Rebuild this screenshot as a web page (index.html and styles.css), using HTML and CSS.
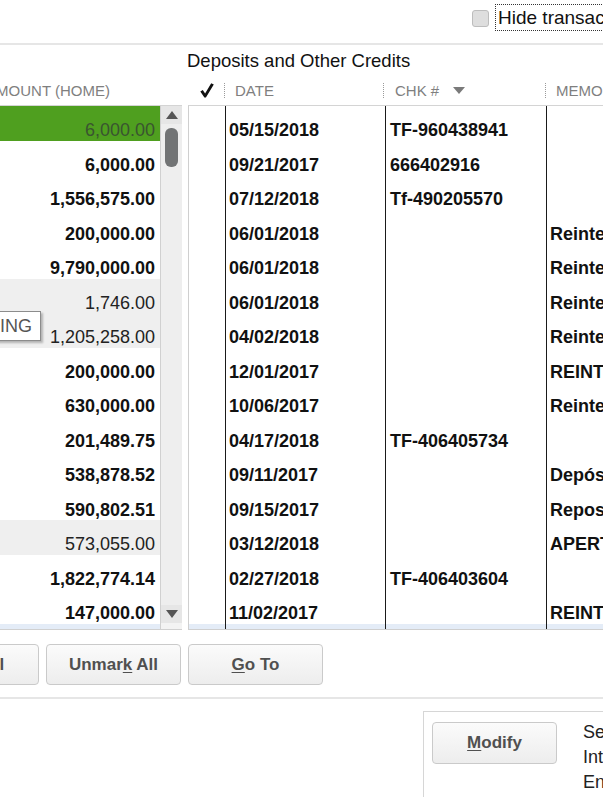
FILE: index.html
```html
<!DOCTYPE html>
<html>
<head>
<meta charset="utf-8">
<link rel="stylesheet" href="styles.css">
</head>
<body>
<div class="page">
  <div class="topbar">
    <span class="checkbox"></span>
    <span class="hide-label">Hide transactions after the statement's end date</span>
  </div>
  <div class="title">Deposits and Other Credits</div>
  <div class="headers">
    <div class="h-left"><span class="h-amount">AMOUNT (HOME)</span></div>
    <div class="h-right">
      <div class="hc hc-check"><svg class="check" width="14" height="15" viewBox="0 0 14 15"><polygon points="0.3,8.6 2.8,7 5.1,10.4 11.2,0.3 13.8,1.4 5.9,14.6 4.4,14.6" fill="#111"/></svg></div>
      <div class="hc hc-date"><span class="sep sep-date"></span>DATE</div>
      <div class="hc hc-chk"><span class="sep sep-chk"></span>CHK #<span class="tri"></span></div>
      <div class="hc hc-memo"><span class="sep sep-memo"></span>MEMO</div>
    </div>
  </div>
  <div class="tables">
    <div class="left">
      <div class="ltable">
        <div class="lrow green">6,000.00</div>
        <div class="lrow">6,000.00</div>
        <div class="lrow">1,556,575.00</div>
        <div class="lrow">200,000.00</div>
        <div class="lrow">9,790,000.00</div>
        <div class="lrow grey">1,746.00</div>
        <div class="lrow grey">1,205,258.00</div>
        <div class="lrow">200,000.00</div>
        <div class="lrow">630,000.00</div>
        <div class="lrow">201,489.75</div>
        <div class="lrow">538,878.52</div>
        <div class="lrow">590,802.51</div>
        <div class="lrow grey">573,055.00</div>
        <div class="lrow">1,822,774.14</div>
        <div class="lrow">147,000.00</div>
        <div class="lstrip"></div>
      </div>
      <div class="scrollbar">
        <div class="sb-up"><span class="arrow-up"></span></div>
        <div class="sb-track"><div class="sb-thumb"></div></div>
        <div class="sb-down"><span class="arrow-down"></span></div>
        <div class="sb-foot"></div>
      </div>
      <div class="tooltip">PENDING</div>
    </div>
    <div class="rtable">
      <div class="rrow"><div class="c-check"></div><div class="c-date">05/15/2018</div><div class="c-chk">TF-960438941</div><div class="c-memo"></div></div>
      <div class="rrow"><div class="c-check"></div><div class="c-date">09/21/2017</div><div class="c-chk">666402916</div><div class="c-memo"></div></div>
      <div class="rrow"><div class="c-check"></div><div class="c-date">07/12/2018</div><div class="c-chk">Tf-490205570</div><div class="c-memo"></div></div>
      <div class="rrow"><div class="c-check"></div><div class="c-date">06/01/2018</div><div class="c-chk"></div><div class="c-memo">Reintegro</div></div>
      <div class="rrow"><div class="c-check"></div><div class="c-date">06/01/2018</div><div class="c-chk"></div><div class="c-memo">Reintegro</div></div>
      <div class="rrow"><div class="c-check"></div><div class="c-date">06/01/2018</div><div class="c-chk"></div><div class="c-memo">Reintegro</div></div>
      <div class="rrow"><div class="c-check"></div><div class="c-date">04/02/2018</div><div class="c-chk"></div><div class="c-memo">Reintegro</div></div>
      <div class="rrow"><div class="c-check"></div><div class="c-date">12/01/2017</div><div class="c-chk"></div><div class="c-memo">REINTEGRO</div></div>
      <div class="rrow"><div class="c-check"></div><div class="c-date">10/06/2017</div><div class="c-chk"></div><div class="c-memo">Reintegro</div></div>
      <div class="rrow"><div class="c-check"></div><div class="c-date">04/17/2018</div><div class="c-chk">TF-406405734</div><div class="c-memo"></div></div>
      <div class="rrow"><div class="c-check"></div><div class="c-date">09/11/2017</div><div class="c-chk"></div><div class="c-memo">Depósito</div></div>
      <div class="rrow"><div class="c-check"></div><div class="c-date">09/15/2017</div><div class="c-chk"></div><div class="c-memo">Reposición</div></div>
      <div class="rrow"><div class="c-check"></div><div class="c-date">03/12/2018</div><div class="c-chk"></div><div class="c-memo">APERTURA</div></div>
      <div class="rrow"><div class="c-check"></div><div class="c-date">02/27/2018</div><div class="c-chk">TF-406403604</div><div class="c-memo"></div></div>
      <div class="rrow"><div class="c-check"></div><div class="c-date">11/02/2017</div><div class="c-chk"></div><div class="c-memo">REINTEGRO</div></div>
      <div class="rstrip"><div class="c-check"></div><div class="c-date"></div><div class="c-chk"></div><div class="c-memo"></div></div>
    </div>
  </div>
  <div class="buttons">
    <div class="btn"><span>Mark All</span></div>
    <div class="btn"><span>Unmar<u>k</u> All</span></div>
    <div class="btn"><span><u>G</u>o To</span></div>
  </div>
  <div class="divider"></div>
  <div class="bottom">
    <div class="panel">
      <div class="btn btn-modify"><span><u>M</u>odify</span></div>
      <div class="ptext">
        <div>Service Charge</div>
        <div>Interest Earned</div>
        <div>Ending Balance</div>
      </div>
    </div>
  </div>
</div>
</body>
</html>
```
FILE: styles.css
```css
* { box-sizing: border-box; }
html, body { margin: 0; padding: 0; }
body {
  width: 603px;
  height: 797px;
  overflow: hidden;
  background: #fff;
  font-family: "Liberation Sans", Arial, sans-serif;
  color: #111;
}
.page { width: 603px; height: 797px; overflow: hidden; }

/* top bar */
.topbar {
  height: 45px;
  border-bottom: 2px solid #e6e6e6;
  display: flex;
  align-items: flex-start;
  padding-left: 472px;
  white-space: nowrap;
  overflow: hidden;
}
.checkbox {
  flex: none;
  width: 17px;
  height: 17px;
  margin-top: 10px;
  margin-right: 6px;
  border: 1px solid #bdbdbd;
  border-radius: 3px;
  background: #dedede;
}
.hide-label {
  flex: none;
  margin-top: 4px;
  height: 27px;
  border: 1px dotted #333;
  padding-left: 2px;
  font-size: 19px;
  line-height: 25px;
  color: #111;
}

/* title + headers */
.title {
  height: 31px;
  line-height: 31px;
  padding-left: 187px;
  font-size: 18.5px;
  color: #111;
  white-space: nowrap;
}
.headers {
  height: 29px;
  display: flex;
  font-size: 15px;
  line-height: 29px;
  color: #7f7f7f;
  white-space: nowrap;
}
.h-left {
  width: 188px;
  flex: none;
  display: flex;
  justify-content: flex-end;
  padding-right: 78px;
}
.h-right { display: flex; padding-left: 1px; }
.hc { display: flex; align-items: center; flex: none; }
.hc-check { width: 37px; justify-content: flex-end; padding-right: 12px; }
.hc-date { width: 160px; }
.hc-chk { width: 161px; }
.hc-memo { width: 80px; }
.sep {
  width: 0;
  height: 15px;
  border-left: 1px dotted #9a9a9a;
}
.sep-date { margin-left: -2px; margin-right: 10px; }
.sep-chk { margin-left: -3px; margin-right: 11px; }
.sep-memo { margin-left: -2px; margin-right: 10px; }
.tri {
  width: 0;
  height: 0;
  margin-left: 14px;
  border-left: 6px solid transparent;
  border-right: 6px solid transparent;
  border-top: 7px solid #7a7a7a;
}

/* tables */
.tables { display: flex; height: 525px; }
.left { position: relative; width: 188px; flex: none; display: flex; }
.ltable {
  width: 161px;
  flex: none;
  border-top: 1px solid #d4d4d4;
  border-right: 1px solid #d0d0d0;
  border-bottom: 1px solid #d0d0d0;
  display: flex;
  flex-direction: column;
}
.lrow {
  height: 34.5px;
  flex: none;
  padding: 14px 5px 0 0;
  text-align: right;
  font-size: 18px;
  line-height: 20px;
  font-weight: bold;
  color: #111;
  white-space: nowrap;
}
.lrow.green { background: #4f9f1f; color: #3a5430; font-weight: normal; }
.lrow.grey { background: #efefef; color: #222; font-weight: normal; }
.lstrip { flex: 1; background: #e4ecf7; }

.scrollbar {
  width: 21px;
  flex: none;
  background: #eeeeee;
  border-top: 1px solid #d4d4d4;
  border-bottom: 1px solid #d0d0d0;
  display: flex;
  flex-direction: column;
  align-items: center;
}
.sb-up, .sb-down {
  width: 100%;
  height: 18px;
  flex: none;
  display: flex;
  justify-content: center;
  align-items: center;
  background: #e6e6e6;
}
.arrow-up {
  width: 0; height: 0;
  border-left: 6px solid transparent;
  border-right: 6px solid transparent;
  border-bottom: 8px solid #555;
}
.arrow-down {
  width: 0; height: 0;
  border-left: 6px solid transparent;
  border-right: 6px solid transparent;
  border-top: 8px solid #555;
}
.sb-track { flex: 1; width: 100%; display: flex; justify-content: center; }
.sb-thumb {
  width: 13px;
  height: 39px;
  margin-top: 4px;
  background: #727475;
  border-radius: 6px;
}
.sb-foot { height: 6px; width: 100%; flex: none; background: #f3f3f3; }

.tooltip {
  position: absolute;
  left: -60px;
  top: 206px;
  width: 101px;
  height: 30px;
  border: 1px solid #8c8c8c;
  background: #fff;
  box-shadow: 2px 2px 2px rgba(0, 0, 0, 0.25);
  font-size: 18px;
  line-height: 28px;
  text-align: right;
  padding-right: 8px;
  color: #555;
  white-space: nowrap;
}

.rtable {
  flex: 1;
  min-width: 0;
  border-top: 1px solid #d4d4d4;
  border-left: 1px solid #cfcfcf;
  border-bottom: 1px solid #cfcfcf;
  display: flex;
  flex-direction: column;
}
.rrow {
  height: 34.5px;
  flex: none;
  display: flex;
  font-size: 18px;
  font-weight: bold;
  line-height: 20px;
  color: #111;
}
.rrow > div { padding-top: 14px; white-space: nowrap; overflow: hidden; }
.rstrip { flex: 1; display: flex; background: #e4ecf7; }
.c-check { width: 37px; flex: none; border-right: 1px solid #1a1a1a; }
.c-date { width: 160px; flex: none; border-right: 1px solid #1a1a1a; padding-left: 3px; }
.c-chk { width: 161px; flex: none; border-right: 1px solid #1a1a1a; padding-left: 4px; }
.c-memo { flex: 1; min-width: 0; padding-left: 3px; }

/* buttons */
.buttons {
  display: flex;
  gap: 7px;
  margin-top: 14px;
  margin-left: -96px;
  height: 41px;
}
.btn {
  width: 135px;
  height: 41px;
  flex: none;
  border: 1px solid #cacaca;
  border-radius: 4px;
  background: linear-gradient(#fbfbfb, #ededed);
  font-size: 17px;
  font-weight: bold;
  color: #505050;
  display: flex;
  align-items: center;
  justify-content: center;
  white-space: nowrap;
}
.btn u { text-decoration: underline; text-underline-offset: 2px; }

.divider { margin-top: 12px; border-top: 2px solid #e6e6e6; }

.bottom { display: flex; margin-top: 12px; }
.panel {
  flex: none;
  width: 260px;
  height: 90px;
  margin-left: 423px;
  border-top: 1px solid #d6d6d6;
  border-left: 1px solid #d6d6d6;
  padding: 10px 0 0 8px;
  display: flex;
  align-items: flex-start;
  white-space: nowrap;
}
.btn-modify { width: 125px; height: 42px; }
.ptext {
  margin-left: 26px;
  margin-top: -2px;
  font-size: 18px;
  line-height: 25px;
  color: #222;
}
```
